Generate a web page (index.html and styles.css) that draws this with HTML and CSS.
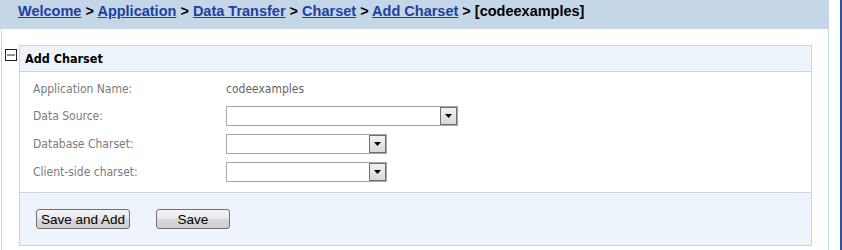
FILE: index.html
```html
<!DOCTYPE html>
<html lang="en">
<head>
  <meta charset="UTF-8">
  <title>Add Charset</title>
  <link rel="stylesheet" href="styles.css">
</head>
<body>
  <div class="page">
    <div class="main">
      <div class="crumbs">
        <a href="#">Welcome</a> &gt; <a href="#">Application</a> &gt; <a href="#">Data Transfer</a> &gt; <a href="#">Charset</a> &gt; <a href="#">Add Charset</a> &gt; [codeexamples]
      </div>
      <div class="content">
        <svg class="toggle" width="12" height="12" viewBox="0 0 12 12">
          <rect x="0.5" y="0.5" width="11" height="11" fill="#fff" stroke="#222"/>
          <line x1="2" y1="6" x2="10" y2="6" stroke="#222"/>
        </svg>
        <div class="panel">
          <div class="panel-head">Add Charset</div>
          <div class="panel-body">
            <div class="lbl">Application Name:</div>
            <div class="val">codeexamples</div>

            <div class="lbl">Data Source:</div>
            <div class="combo wide"><select></select><span class="drop"><svg width="7" height="4" viewBox="0 0 7 4"><path d="M0 0h7L3.5 4z" fill="#000"/></svg></span></div>

            <div class="lbl">Database Charset:</div>
            <div class="combo"><select></select><span class="drop"><svg width="7" height="4" viewBox="0 0 7 4"><path d="M0 0h7L3.5 4z" fill="#000"/></svg></span></div>

            <div class="lbl">Client-side charset:</div>
            <div class="combo"><select></select><span class="drop"><svg width="7" height="4" viewBox="0 0 7 4"><path d="M0 0h7L3.5 4z" fill="#000"/></svg></span></div>
          </div>
          <div class="panel-foot">
            <button class="btn add">Save and Add</button>
            <button class="btn save">Save</button>
          </div>
        </div>
      </div>
    </div>
    <div class="scroll"></div>
  </div>
</body>
</html>
```

FILE: styles.css
```css
body { margin: 0; background: #fff; }
.page { display: flex; height: 250px; }
.main { width: 829px; display: flex; flex-direction: column; }
.scroll { width: 11px; border-right: 2px solid #2d56a0; }

.crumbs {
  height: 26px; padding: 3px 0 0 18px; line-height: 26px;
  background: #c5d6e8; color: #000;
  font: bold 14.5px "Liberation Sans", Arial, sans-serif;
  white-space: nowrap;
}
.crumbs a { color: #1f3f9f; text-decoration: underline; }

.content {
  flex: 1; display: flex; align-items: flex-start;
  margin-left: 1px; border-left: 1px solid #c5d9ee; border-right: 1px solid #c5d9ee;
  padding-top: 16px;
}
.toggle { margin: 4px 0 0 3px; }

.panel {
  width: 791px; margin-left: 2px;
  border: 1px solid #c3d7ec;
  font-family: "DejaVu Sans Condensed", "DejaVu Sans", sans-serif;
}
.panel-head {
  height: 25px; line-height: 25px; padding-left: 5px;
  background: #eef4fc; border-bottom: 1px solid #c3d7ec;
  font-weight: bold; font-size: 12.5px; color: #000;
}
.panel-body {
  display: grid; grid-template-columns: 193px auto;
  grid-template-rows: 18px 20px 20px 20px; row-gap: 8px;
  align-items: center; justify-items: start;
  padding: 8px 0 10px 13px;
  font-size: 12px;
}
.lbl { color: #7b7b7b; }
.val { color: #666; }

.combo { position: relative; width: 161px; height: 20px; }
.combo.wide { width: 232px; }
.combo select {
  -webkit-appearance: none; appearance: none;
  width: 100%; height: 20px; margin: 0;
  border: 1px solid #a6a6a6; background: #fff;
}
.drop {
  position: absolute; top: 1px; right: 1px; width: 15px; height: 16px;
  border: 1px solid #707070;
  background: linear-gradient(#f2f2f2, #d8d8d8);
  display: flex; align-items: center; justify-content: center;
}

.panel-foot {
  display: flex; gap: 26px;
  padding: 16px 0 16px 16px;
  background: #eef4fc; border-top: 1px solid #c3d7ec;
}
.btn {
  height: 20px; padding: 0; margin: 0;
  border: 1px solid #707070; border-radius: 3px;
  background: linear-gradient(#f4f4f4 0%, #e8e8e8 50%, #d8d8d8 51%, #cfcfcf 100%);
  font: 13.5px "Liberation Sans", Arial, sans-serif; color: #000;
}
.btn.add { width: 94px; }
.btn.save { width: 74px; }
```
